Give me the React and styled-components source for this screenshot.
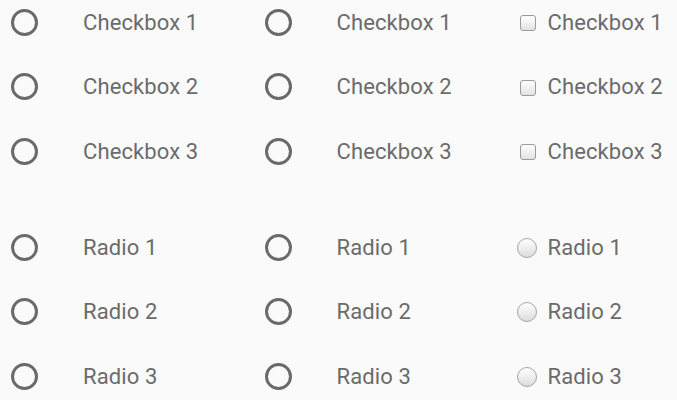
import styled, { createGlobalStyle } from "styled-components";

const GlobalStyle = createGlobalStyle`
    html, body {
        margin: 0;
        padding: 0;
        background: #fafafa;
    }
    body {
        font-family: Roboto, "Liberation Sans", sans-serif;
    }
`;

const Page = styled.div`
    width: 677px;
    height: 400px;
    overflow: hidden;
    background: #fafafa;
`;

const Group = styled.div`
    display: grid;
    grid-template-columns: 253.5px 253.5px 1fr;
    row-gap: 20.5px;
    margin-bottom: ${(p) => p.$after || 0}px;
`;

const Cell = styled.label`
    display: flex;
    align-items: center;
    height: 44px;
    padding-left: ${(p) => p.$pad}px;
    gap: ${(p) => p.$gap}px;
`;

const Ring = styled.span`
    box-sizing: border-box;
    width: 27px;
    height: 27px;
    border: 3px solid #6a6a6a;
    border-radius: 50%;
    flex-shrink: 0;
`;

const Box = styled.span`
    box-sizing: border-box;
    width: 16px;
    height: 16px;
    border: 1px solid #9a9a9a;
    border-radius: 3px;
    background: linear-gradient(#ffffff, #e2e2e2);
    box-shadow: inset 0 1px 0 #fff;
    flex-shrink: 0;
    margin-top: 2px;
`;

const Dot = styled.span`
    box-sizing: border-box;
    width: 20px;
    height: 20px;
    border: 1px solid #a5a5a5;
    border-radius: 50%;
    background: linear-gradient(#ffffff, #dcdcdc);
    flex-shrink: 0;
    margin-top: 1px;
`;

const Text = styled.span`
    font-size: 22px;
    color: #6b6b6b;
    letter-spacing: 0.1px;
`;

const checks = ["Checkbox 1", "Checkbox 2", "Checkbox 3"];
const radios = ["Radio 1", "Radio 2", "Radio 3"];

const App = () => {
    return (
        <Page>
            <GlobalStyle />
            <Group $after={52}>
                {checks.map((t) => [
                    <Cell key={t + "a"} $pad={11} $gap={45}><Ring /><Text>{t}</Text></Cell>,
                    <Cell key={t + "b"} $pad={11} $gap={45}><Ring /><Text>{t}</Text></Cell>,
                    <Cell key={t + "c"} $pad={13} $gap={11.5}><Box /><Text>{t}</Text></Cell>,
                ])}
            </Group>
            <Group>
                {radios.map((t) => [
                    <Cell key={t + "a"} $pad={11} $gap={45}><Ring /><Text>{t}</Text></Cell>,
                    <Cell key={t + "b"} $pad={11} $gap={45}><Ring /><Text>{t}</Text></Cell>,
                    <Cell key={t + "c"} $pad={10} $gap={10.5}><Dot /><Text>{t}</Text></Cell>,
                ])}
            </Group>
        </Page>
    )
}

export default App
